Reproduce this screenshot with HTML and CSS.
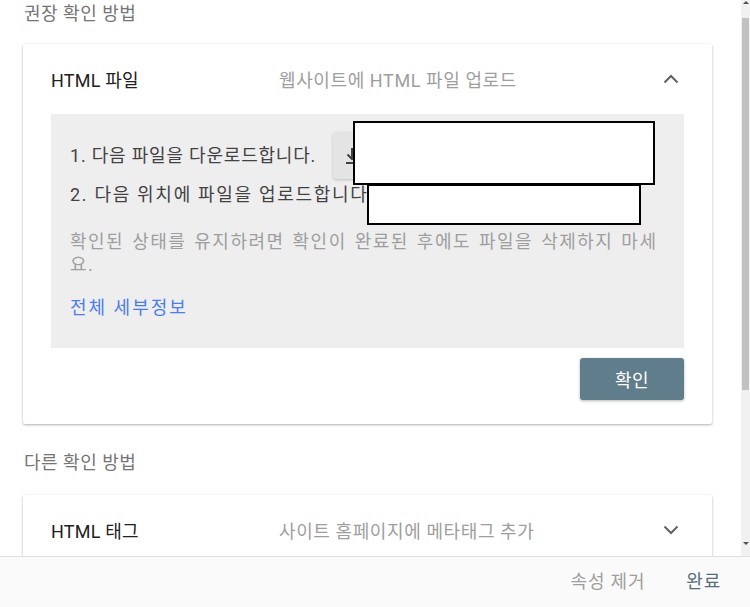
FILE: index.html
```html
<!DOCTYPE html>
<html lang="ko">
<head>
<meta charset="utf-8">
<link rel="stylesheet" href="styles.css">
</head>
<body>
<div class="dialog">
  <div class="main">
    <div class="content">
      <div class="section-title first">권장 확인 방법</div>
      <div class="card">
        <div class="card-head">
          <div class="card-title">HTML 파일</div>
          <div class="card-sub">웹사이트에 HTML 파일 업로드</div>
          <svg class="chev" width="16" height="10" viewBox="0 0 16 10"><path d="M1.5 8.5 L8 2 L14.5 8.5" fill="none" stroke="#616161" stroke-width="2"/></svg>
        </div>
        <div class="panel">
          <div class="step-row">
            <span class="step">1. 다음 파일을 다운로드합니다.</span>
            <span class="chip">
              <svg width="14" height="18" viewBox="0 0 14 18"><path d="M7 1 V12 M2.5 7.5 L7 12 L11.5 7.5 M1 16 H13" fill="none" stroke="#424242" stroke-width="2"/></svg>
              <span class="chip-text">google0000000000000000.html</span>
            </span>
          </div>
          <div class="step step2">2. 다음 위치에 파일을 업로드합니다</div>
          <p class="note">확인된 상태를 유지하려면 확인이 완료된 후에도 파일을 삭제하지 마세요.</p>
          <a class="link" href="#">전체 세부정보</a>
          <div class="redact r1"></div>
          <div class="redact r2"></div>
        </div>
        <div class="card-actions">
          <button class="btn">확인</button>
        </div>
      </div>
      <div class="section-title">다른 확인 방법</div>
      <div class="card">
        <div class="card-head">
          <div class="card-title">HTML 태그</div>
          <div class="card-sub">사이트 홈페이지에 메타태그 추가</div>
          <svg class="chev" width="16" height="10" viewBox="0 0 16 10"><path d="M1.5 1.5 L8 8 L14.5 1.5" fill="none" stroke="#616161" stroke-width="2"/></svg>
        </div>
        <div class="filler"></div>
      </div>
    </div>
    <div class="scrollbar">
      <div class="sb-up"></div>
      <div class="sb-thumb"></div>
      <div class="sb-rest"></div>
      <div class="sb-down"></div>
    </div>
  </div>
  <div class="footer">
    <span class="f-btn muted">속성 제거</span>
    <span class="f-btn done">완료</span>
  </div>
</div>
</body>
</html>
```
FILE: styles.css
```css
* { box-sizing: border-box; }
html, body { margin: 0; padding: 0; background: #fff; }
body {
  font-family: Roboto, "Noto Sans CJK KR", sans-serif;
  font-size: 18px;
  letter-spacing: 0.5px;
  color: #212121;
}
.dialog { width: 750px; height: 607px; display: flex; flex-direction: column; }
.main { height: 556px; display: flex; overflow: hidden; }
.content { flex: 1; padding: 2px 29px 0 23px; overflow: hidden; }
.section-title {
  color: #757575;
  line-height: 24px;
  height: 24px;
  padding-left: 1px;
  margin: 27px 0 20px;
}
.section-title.first { margin: 0 0 18px; }
.card {
  background: #fff;
  border-radius: 2px;
  box-shadow: 0 1px 3px rgba(0,0,0,0.22), 0 1px 2px rgba(0,0,0,0.12);
}
.card-head {
  height: 70px;
  display: flex;
  align-items: center;
  padding: 0 33px 0 28px;
}
.card-title { width: 228px; color: #212121; letter-spacing: 0.2px; }
.card-sub { flex: 1; color: #9e9e9e; letter-spacing: 0.6px; }
.chev { display: block; }
.panel {
  position: relative;
  margin: 0 28px;
  background: #eeeeee;
  padding: 18px 12px 28px 19px;
  color: #424242;
  letter-spacing: 0.8px;
}
.step-row { display: flex; align-items: center; height: 47px; }
.step { line-height: 24px; }
.chip {
  margin-left: 17px;
  height: 47px;
  width: 320px;
  background: #e4e4e4;
  border-radius: 4px;
  box-shadow: 0 1px 3px rgba(0,0,0,0.2);
  display: flex;
  align-items: center;
  padding-left: 12px;
  gap: 8px;
  overflow: hidden;
  white-space: nowrap;
}
.chip svg { display: block; flex: none; }
.chip-text { color: #ececec; }
.step2 { margin-top: 4px; letter-spacing: 1.7px; }
.note { margin: 23px 0 0; color: #9e9e9e; line-height: 23px; letter-spacing: 1.5px; word-spacing: 2px; }
.link { display: block; margin-top: 20px; line-height: 24px; color: #4a7bf0; text-decoration: none; letter-spacing: 2px; }
.redact { position: absolute; background: #fff; border: 2px solid #000; }
.r1 { left: 302px; top: 7px; width: 302px; height: 64px; }
.r2 { left: 316px; top: 70px; width: 274px; height: 41px; }
.card-actions { display: flex; justify-content: flex-end; padding: 10px 28px 24px; }
.btn {
  width: 104px;
  height: 42px;
  border: none;
  border-radius: 3px;
  background: #607d8b;
  color: #fff;
  font: inherit;
  letter-spacing: 0.5px;
  box-shadow: 0 1px 3px rgba(0,0,0,0.3);
}
.filler { height: 60px; }
.scrollbar {
  width: 9px;
  background: #f1f1f1;
  display: flex;
  flex-direction: column;
  align-items: center;
}
.sb-up { height: 18px; width: 100%; display: flex; justify-content: center; }
.sb-up::before {
  content: "";
  margin-top: 1px;
  border-left: 3px solid transparent;
  border-right: 3px solid transparent;
  border-bottom: 3px solid #505050;
  height: 0;
}
.sb-thumb { width: 7px; height: 372px; background: #c1c1c1; }
.sb-rest { flex: 1; }
.sb-down { height: 14px; width: 100%; display: flex; justify-content: center; }
.sb-down::before {
  content: "";
  border-left: 3px solid transparent;
  border-right: 3px solid transparent;
  border-top: 3px solid #505050;
  height: 0;
}
.footer {
  flex: 1;
  background: #fafafa;
  border-top: 1px solid #e0e0e0;
  display: flex;
  align-items: center;
  justify-content: flex-end;
  padding: 0 29px 0 0;
  gap: 41px;
}
.f-btn { line-height: 24px; letter-spacing: 0.8px; }
.muted { color: #9e9e9e; }
.done { color: #546e7a; }
```
